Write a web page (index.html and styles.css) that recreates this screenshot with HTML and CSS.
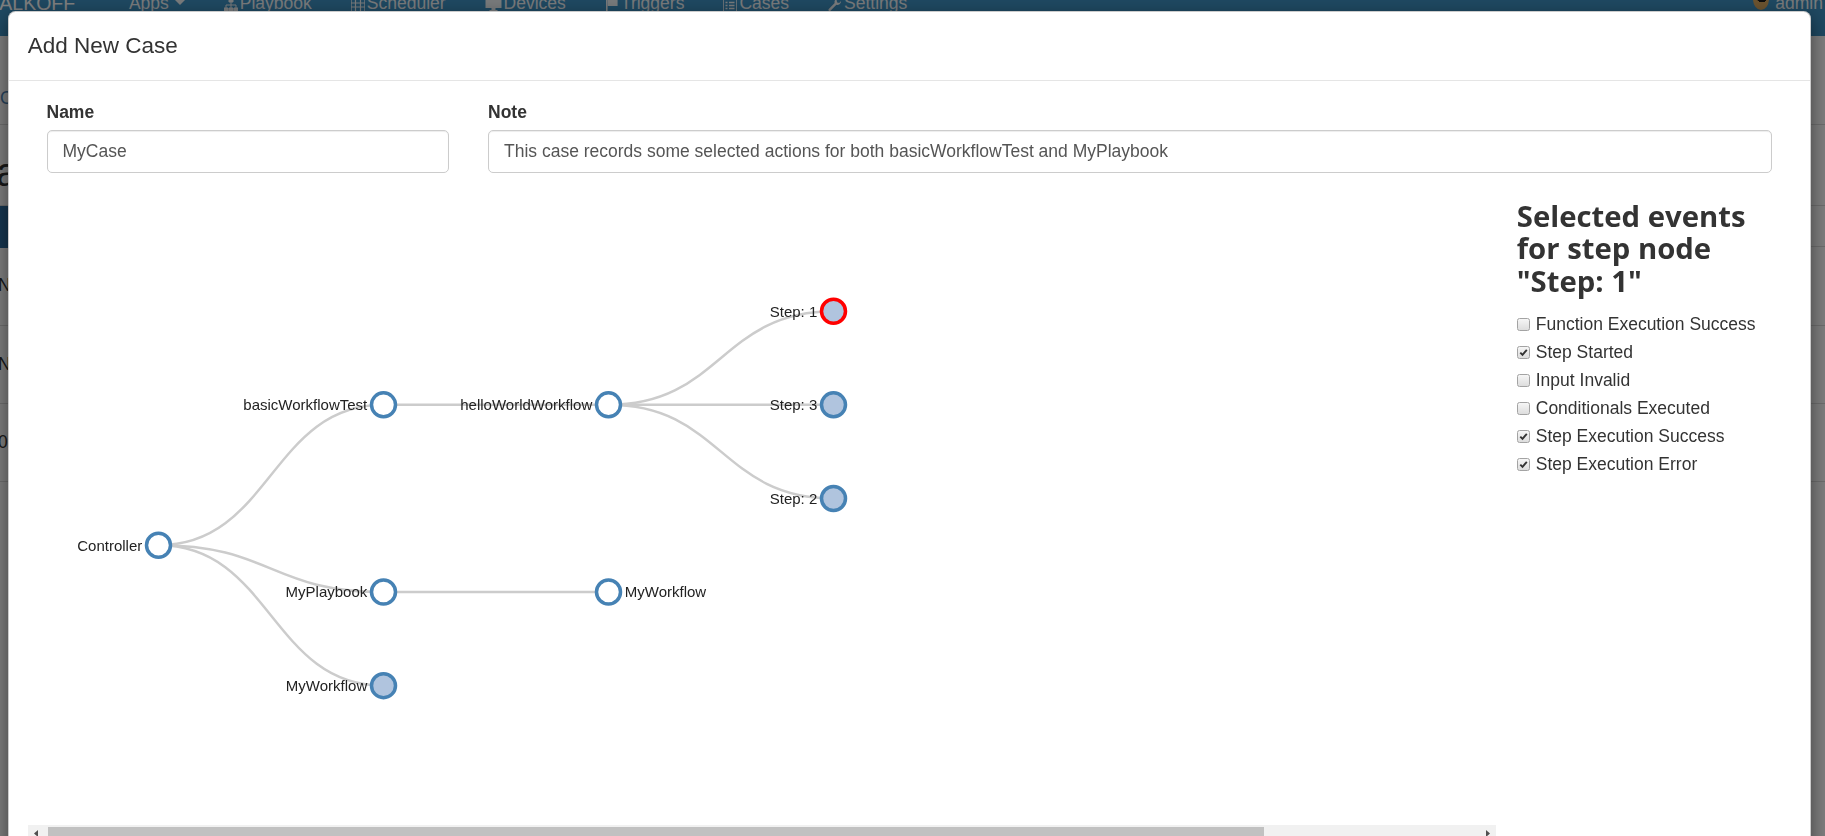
FILE: index.html
```html
<!DOCTYPE html>
<html lang="en">
<head>
<meta charset="utf-8">
<title>Cases - Add New Case</title>
<link rel="stylesheet" href="styles.css">
</head>
<body>
<div class="page">
  <nav class="navbar">
    <div class="nav-inner">
      <span class="brand">WALKOFF</span>
      <ul class="nav-list">
        <li class="nav-item">Apps <span class="caret"></span></li>
        <li class="nav-item"><svg class="ni" viewBox="0 0 14 14"><path d="M5 1h4v3H5zM7 4v3M2 7h10M2 7v3M7 7v3M12 7v3M0 10h4v4H0zM5 10h4v4H5zM10 10h4v4h-4z" fill="currentColor" stroke="currentColor" stroke-width="1"/></svg>Playbook</li>
        <li class="nav-item"><svg class="ni" viewBox="0 0 14 14"><path d="M0 1h14v13H0z" fill="none" stroke="currentColor" stroke-width="1.4"/><path d="M0 5h14M0 9h14M4.5 1v13M9.5 1v13" stroke="currentColor" stroke-width="1.2"/></svg>Scheduler</li>
        <li class="nav-item"><svg class="ni ni-wide" viewBox="0 0 16 14"><path d="M0 1h16v9H0z" fill="currentColor"/><path d="M6 10h4v2H6zM4 12h8v2H4z" fill="currentColor"/></svg>Devices</li>
        <li class="nav-item"><svg class="ni" viewBox="0 0 14 14"><path d="M1 0h1.6v14H1z" fill="currentColor"/><path d="M2.6 1h10v7h-10z" fill="currentColor"/></svg>Triggers</li>
        <li class="nav-item"><svg class="ni" viewBox="0 0 14 14"><path d="M0 1h14v13H0z" fill="none" stroke="currentColor" stroke-width="1.6"/><path d="M2.5 4.5h2M6 4.5h5.5M2.5 7.5h2M6 7.5h5.5M2.5 10.5h2M6 10.5h5.5" stroke="currentColor" stroke-width="1.4"/></svg>Cases</li>
        <li class="nav-item"><svg class="ni" viewBox="0 0 14 14"><path d="M13 3.5a3.5 3.5 0 0 1-4.6 3.3L2.5 12.7a1.2 1.2 0 0 1-1.7-1.7l5.9-5.9A3.5 3.5 0 0 1 10.5 0.5L8.6 2.4l0.6 2l2 0.6l1.9-1.9z" fill="currentColor"/></svg>Settings</li>
      </ul>
      <div class="nav-user"><span class="avatar"></span><span class="user-name">admin</span></div>
    </div>
  </nav>
  <div class="page-body">
    <div class="crumbs">Cases</div>
    <h1 class="page-title">Cases</h1>
    <div class="toolbar"><span class="btn-add">+ Add Case</span></div>
    <div class="table-row head">Name</div>
    <div class="table-row">Name</div>
    <div class="table-row">0</div>
  </div>
</div>

<div class="backdrop"></div>

<div class="modal" role="dialog">
  <div class="modal-header">
    <h4 class="modal-title">Add New Case</h4>
  </div>
  <div class="modal-body">
    <div class="form-row">
      <div class="form-group name-group">
        <label class="form-label">Name</label>
        <input class="form-control" type="text" value="MyCase">
      </div>
      <div class="form-group note-group">
        <label class="form-label">Note</label>
        <input class="form-control" type="text" value="This case records some selected actions for both basicWorkflowTest and MyPlaybook">
      </div>
    </div>

    <div class="case-row">
      <div class="graph-col">
        <div class="graph-view">
          <svg class="tree" width="1468" height="632" viewBox="0 0 1468 632">
            <g class="links">
              <path d="M130.5,352.25 C243,352.25 243,211.85 355.5,211.85"/>
              <path d="M130.5,352.25 C243,352.25 243,399.05 355.5,399.05"/>
              <path d="M130.5,352.25 C243,352.25 243,492.65 355.5,492.65"/>
              <path d="M355.5,211.85 L580.5,211.85"/>
              <path d="M580.5,211.85 C693,211.85 693,118.25 805.5,118.25"/>
              <path d="M580.5,211.85 L805.5,211.85"/>
              <path d="M580.5,211.85 C693,211.85 693,305.45 805.5,305.45"/>
              <path d="M355.5,399.05 L580.5,399.05"/>
            </g>
            <g class="nodes">
              <g class="node" transform="translate(130.5,352.25)"><circle r="12"/><text x="-16.25" dy=".35em" text-anchor="end">Controller</text></g>
              <g class="node" transform="translate(355.5,211.85)"><circle r="12"/><text x="-16.25" dy=".35em" text-anchor="end">basicWorkflowTest</text></g>
              <g class="node" transform="translate(580.5,211.85)"><circle r="12"/><text x="-16.25" dy=".35em" text-anchor="end">helloWorldWorkflow</text></g>
              <g class="node collapsed selected" transform="translate(805.5,118.25)"><circle r="12"/><text x="-16.25" dy=".35em" text-anchor="end">Step: 1</text></g>
              <g class="node collapsed" transform="translate(805.5,211.85)"><circle r="12"/><text x="-16.25" dy=".35em" text-anchor="end">Step: 3</text></g>
              <g class="node collapsed" transform="translate(805.5,305.45)"><circle r="12"/><text x="-16.25" dy=".35em" text-anchor="end">Step: 2</text></g>
              <g class="node" transform="translate(355.5,399.05)"><circle r="12"/><text x="-16.25" dy=".35em" text-anchor="end">MyPlaybook</text></g>
              <g class="node" transform="translate(580.5,399.05)"><circle r="12"/><text x="16.25" dy=".35em" text-anchor="start">MyWorkflow</text></g>
              <g class="node collapsed" transform="translate(355.5,492.65)"><circle r="12"/><text x="-16.25" dy=".35em" text-anchor="end">MyWorkflow</text></g>
            </g>
          </svg>
        </div>
        <div class="hscroll">
          <span class="sb-btn"><svg viewBox="0 0 17 17"><path d="M10 5v7L6 8.5z"/></svg></span>
          <div class="sb-track"><div class="sb-thumb"></div></div>
          <span class="sb-btn"><svg viewBox="0 0 17 17"><path d="M7 5v7l4-3.5z"/></svg></span>
        </div>
      </div>

      <div class="events-col">
        <h3 class="events-title">Selected events for step node "Step: 1"</h3>
        <ul class="event-list">
          <li class="event"><span class="cb"></span>Function Execution Success</li>
          <li class="event"><span class="cb"><svg viewBox="0 0 11 11"><path d="M2.3 5.6l2.2 2.3 4.3-5"/></svg></span>Step Started</li>
          <li class="event"><span class="cb"></span>Input Invalid</li>
          <li class="event"><span class="cb"></span>Conditionals Executed</li>
          <li class="event"><span class="cb"><svg viewBox="0 0 11 11"><path d="M2.3 5.6l2.2 2.3 4.3-5"/></svg></span>Step Execution Success</li>
          <li class="event"><span class="cb"><svg viewBox="0 0 11 11"><path d="M2.3 5.6l2.2 2.3 4.3-5"/></svg></span>Step Execution Error</li>
        </ul>
      </div>
    </div>
  </div>
</div>
</body>
</html>
```

FILE: styles.css
```css
* { box-sizing: border-box; }

html, body {
  margin: 0;
  padding: 0;
  width: 1825px;
  height: 836px;
  overflow: hidden;
}

body {
  position: relative;
  font-family: "Liberation Sans", Arial, sans-serif;
  font-size: 17.5px;
  color: #333;
  background: #fff;
}

/* ---------- background page ---------- */
.navbar {
  height: 36px;
  background: #3e92c4;
  overflow: hidden;
}

.nav-inner {
  display: flex;
  align-items: center;
  height: 20px;
  line-height: 20px;
  margin-top: -7.5px;
  color: #f2f6f9;
}

.brand {
  margin-left: -18.4px;
  font-size: 19.5px;
  color: #fff;
}

.nav-list {
  display: flex;
  list-style: none;
  margin: 0 0 0 34.25px;
  padding: 0;
}

.nav-item {
  display: flex;
  align-items: center;
  padding: 0 19.5px;
  white-space: nowrap;
}

.caret {
  display: inline-block;
  margin-left: 6px;
  border-top: 5px solid currentColor;
  border-left: 5px solid transparent;
  border-right: 5px solid transparent;
}

.ni {
  width: 14px;
  height: 14px;
  margin-right: 2px;
  margin-top: 4px;
}

.ni-wide { width: 17px; }

.nav-user {
  display: flex;
  align-items: center;
  margin-left: auto;
  margin-right: 2px;
}

.avatar {
  width: 16px;
  height: 22px;
  margin-top: -8px;
  border-radius: 50%;
  background: radial-gradient(circle at 55% 40%, #1a1a1a 0 35%, #d8a860 36% 100%);
  margin-right: 6px;
}

.user-name { color: #f2f6f9; }

.crumbs {
  height: 89px;
  padding-top: 52px;
  border-bottom: 1px solid #dcdcdc;
  color: #4f86b8;
  font-size: 17.5px;
}

.page-title {
  margin: 0 0 0 -33px;
  height: 80px;
  padding-top: 27px;
  font-size: 40px;
  line-height: 40px;
  font-weight: 500;
  color: #333;
}

.toolbar {
  height: 42px;
  border-top: 1px solid #dcdcdc;
  border-bottom: 1px solid #dcdcdc;
}

.btn-add {
  display: inline-block;
  height: 42px;
  width: 60px;
  margin-left: -44px;
  padding: 10px 8px;
  background: #2d6da0;
  color: #fff;
  font-weight: bold;
  line-height: 22px;
}

.table-row {
  height: 78px;
  border-bottom: 1px solid #dcdcdc;
  padding-top: 28px;
  margin-left: -2px;
}

.table-row.head { height: 79px; }

/* ---------- backdrop + modal ---------- */
.backdrop {
  position: fixed;
  inset: 0;
  background: rgba(0, 0, 0, 0.5);
}

.modal {
  position: absolute;
  left: 8px;
  top: 10.5px;
  width: 1803px;
  height: 900px;
  background: #fff;
  border: 1px solid rgba(0, 0, 0, 0.2);
  border-radius: 7.5px;
  box-shadow: 0 6px 19px rgba(0, 0, 0, 0.5);
}

.modal-header {
  padding: 18.75px 18.75px 17.5px;
  border-bottom: 1px solid #e5e5e5;
}

.modal-title {
  margin: 0;
  font-size: 22.5px;
  line-height: 32px;
  font-weight: 500;
  color: #333;
}

.modal-body {
  padding: 18.75px;
}

.form-row {
  display: flex;
  gap: 39px;
  padding: 0 19.5px 0 18.75px;
}

.form-group {
  margin-bottom: 18.75px;
}

.name-group { width: 402.5px; }
.note-group { flex: 1; }

.form-label {
  display: block;
  margin-bottom: 5.5px;
  font-weight: bold;
  line-height: 25px;
  color: #333;
}

.form-control {
  display: block;
  width: 100%;
  height: 42.5px;
  padding: 7.5px 15px;
  font-family: "Liberation Sans", Arial, sans-serif;
  font-size: 17.5px;
  line-height: 25px;
  color: #555;
  background: #fff;
  border: 1px solid #ccc;
  border-radius: 5px;
  box-shadow: inset 0 1px 1px rgba(0, 0, 0, 0.075);
  outline: none;
}

.case-row {
  display: flex;
}

.graph-col {
  width: 1468px;
}

.graph-view {
  height: 634px;
  padding-top: 1.5px;
  overflow: hidden;
}

.tree { display: block; }

.links path {
  fill: none;
  stroke: #ccc;
  stroke-width: 2.5px;
}

.node circle {
  fill: #fff;
  stroke: #4682b4;
  stroke-width: 3.5px;
}

.node.collapsed circle { fill: #b0c4de; }
.node.selected circle { stroke: #ff0000; }

.node text {
  font-family: "Liberation Sans", Arial, sans-serif;
  font-size: 15px;
  fill: #222;
}

.hscroll {
  display: flex;
  height: 17px;
  background: #f1f1f1;
}

.sb-btn {
  width: 17px;
  height: 17px;
  flex: none;
}

.sb-btn svg {
  width: 17px;
  height: 17px;
  display: block;
  fill: #505050;
}

.sb-track {
  flex: 1;
  padding: 2px 3px;
}

.sb-thumb {
  width: 1216px;
  height: 13px;
  background: #c1c1c1;
}

.events-col {
  width: 250px;
  margin-left: 21px;
}

.events-title {
  margin: 8.5px 0 13.3px;
  font-family: "Open Sans", "Liberation Sans", sans-serif;
  font-weight: 700;
  font-size: 29.3px;
  line-height: 32.6px;
  color: #333;
}

.event-list {
  list-style: none;
  margin: 0;
  padding: 0;
}

.event {
  display: flex;
  align-items: center;
  height: 27.9px;
  white-space: nowrap;
  color: #333;
}

.cb {
  display: inline-flex;
  width: 13px;
  height: 13px;
  margin-right: 6px;
  border: 1px solid #a3a3a3;
  border-radius: 2.5px;
  background: linear-gradient(#f6f6f6, #dddddd);
  flex: none;
}

.cb svg {
  width: 11px;
  height: 11px;
  display: block;
}

.cb svg path {
  fill: none;
  stroke: #333;
  stroke-width: 1.9;
}
```
